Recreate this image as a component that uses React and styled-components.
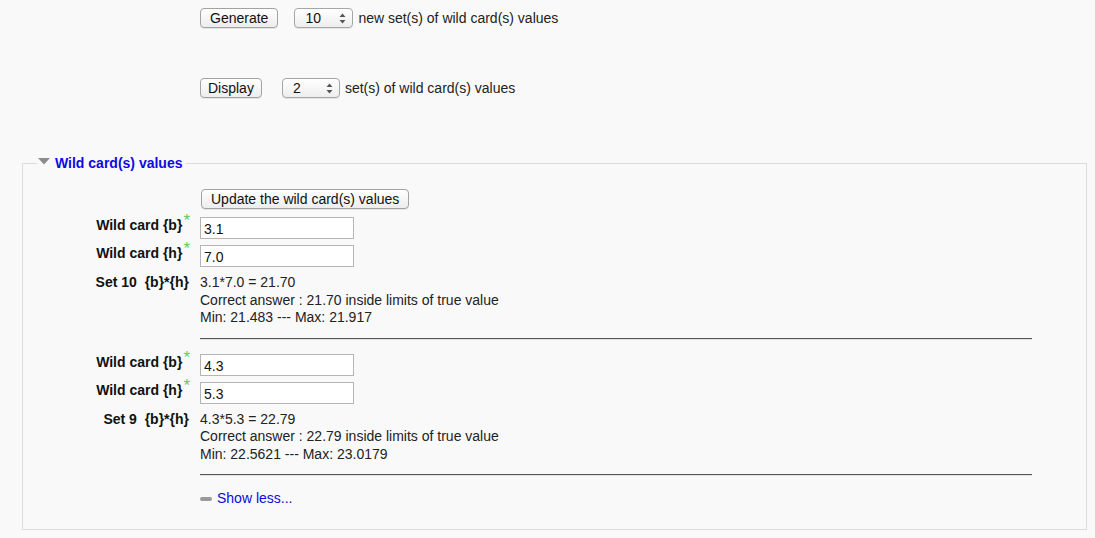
import React from "react";
import styled, { createGlobalStyle } from "styled-components";

const GlobalStyle = createGlobalStyle`
  html, body {
    margin: 0;
    padding: 0;
    background-color: #f9f9f9;
  }
  body {
    font-family: "Liberation Sans", Arial, sans-serif;
    font-size: 14px;
    color: #222;
  }
`;

const wildcardSets = [
  {
    id: 10,
    b: "3.1",
    h: "7.0",
    formula: "3.1*7.0 = 21.70",
    answer: "Correct answer : 21.70 inside limits of true value",
    limits: "Min: 21.483 --- Max: 21.917",
  },
  {
    id: 9,
    b: "4.3",
    h: "5.3",
    formula: "4.3*5.3 = 22.79",
    answer: "Correct answer : 22.79 inside limits of true value",
    limits: "Min: 22.5621 --- Max: 23.0179",
  },
];

function Spinner({ value, width }) {
  return (
    <FakeSelect $w={width}>
      <span>{value}</span>
      <svg width="7" height="11" viewBox="0 0 7 11">
        <path d="M3.5 0.5 L6.5 4 L0.5 4 Z" fill="#555" />
        <path d="M3.5 10.5 L6.5 7 L0.5 7 Z" fill="#555" />
      </svg>
    </FakeSelect>
  );
}

function WildcardBlock({ set, first }) {
  return (
    <>
      <FItem $mt={first ? 8 : 14}>
        <Label>
          Wild card {"{b}"}
          <Req>*</Req>
        </Label>
        <div>
          <TextInput defaultValue={set.b} />
        </div>
      </FItem>
      <FItem $mt={6}>
        <Label>
          Wild card {"{h}"}
          <Req>*</Req>
        </Label>
        <div>
          <TextInput defaultValue={set.h} />
        </div>
      </FItem>
      <FItem $mt={7}>
        <Label $pr={1}>
          Set {set.id}&nbsp;&nbsp;{"{b}*{h}"}
        </Label>
        <Static>
          <div>{set.formula}</div>
          <div>{set.answer}</div>
          <div>{set.limits}</div>
        </Static>
      </FItem>
      <FItem $mt={11}>
        <span />
        <Rule />
      </FItem>
    </>
  );
}

export default function App() {
  return (
    <>
      <GlobalStyle />
      <Page>
        <TopForm>
          <TopRow>
            <Button $pad={9}>Generate</Button>
            <Spinner value="10" width={59} />
            <TopText>new set(s) of wild card(s) values</TopText>
          </TopRow>
          <TopRow $mt={50}>
            <Button $gap={20} $pad={7}>
              Display
            </Button>
            <Spinner value="2" width={58} />
            <TopText>set(s) of wild card(s) values</TopText>
          </TopRow>
        </TopForm>

        <Fieldset>
          <Legend>
            <svg width="12" height="7" viewBox="0 0 12 7">
              <path d="M0 0 L12 0 L6 6.5 Z" fill="#8c8c8c" />
            </svg>
            <span>Wild card(s) values</span>
          </Legend>

          <FItem $mt={18}>
            <span />
            <div>
              <Button $gap={0} $pad={9} $ml={1}>
                Update the wild card(s) values
              </Button>
            </div>
          </FItem>

          {wildcardSets.map((s, i) => (
            <WildcardBlock key={s.id} set={s} first={i === 0} />
          ))}

          <FItem $mt={14}>
            <span />
            <ShowLess>
              <Minus />
              <a href="#">Show less...</a>
            </ShowLess>
          </FItem>
        </Fieldset>
      </Page>
    </>
  );
}

const Page = styled.div`
  width: 1095px;
  height: 538px;
  overflow: hidden;
`;

const TopForm = styled.div`
  padding: 8px 0 0 200px;
`;

const TopRow = styled.div`
  display: flex;
  align-items: center;
  height: 20px;
  margin-top: ${(p) => p.$mt || 0}px;
`;

const Button = styled.button`
  box-sizing: border-box;
  height: 20px;
  margin: 0 ${(p) => (p.$gap === undefined ? 16 : p.$gap)}px 0
    ${(p) => p.$ml || 0}px;
  padding: 0 ${(p) => p.$pad || 9}px;
  font-family: "Liberation Sans", Arial, sans-serif;
  font-size: 14px;
  line-height: 18px;
  color: #111;
  background: linear-gradient(#ffffff, #ededed);
  border: 1px solid #a2a2a2;
  border-radius: 4px;
  box-shadow: 0 1px 0 rgba(0, 0, 0, 0.08);
  cursor: pointer;
`;

const FakeSelect = styled.div`
  box-sizing: border-box;
  width: ${(p) => p.$w}px;
  height: 20px;
  display: flex;
  align-items: center;
  justify-content: space-between;
  padding: 0 6px 0 10px;
  background: linear-gradient(#ffffff, #eeeeee);
  border: 1px solid #a6a6a6;
  border-radius: 4px;
  box-shadow: 0 1px 0 rgba(0, 0, 0, 0.08);
  color: #111;
`;

const TopText = styled.span`
  margin-left: 5px;
  color: #222;
`;

const Fieldset = styled.fieldset`
  margin: 57px 8px 0 22px;
  padding: 0 0 22px 0;
  border: 1px solid #dcdcdc;
  min-width: 0;
`;

const Legend = styled.legend`
  margin-left: 14px;
  padding: 0 4px 0 1px;
  line-height: 16px;
  height: 16px;
  display: flex;
  align-items: center;
  gap: 5px;
  color: #0b0be0;
  font-weight: bold;
  font-size: 14px;

  svg {
    margin-top: -3px;
  }
`;

const FItem = styled.div`
  display: grid;
  grid-template-columns: 167px 832px;
  column-gap: 10px;
  margin-top: ${(p) => p.$mt || 0}px;
`;

const Label = styled.div`
  text-align: right;
  font-weight: bold;
  color: #111;
  line-height: 17px;
  height: 17px;
  white-space: nowrap;
  padding-right: ${(p) => p.$pr || 0}px;
`;

const Req = styled.span`
  color: #5fcc5f;
  font-weight: normal;
  font-size: 17px;
  line-height: 0;
  margin-left: 1px;
  position: relative;
  top: -4px;
`;

const TextInput = styled.input`
  box-sizing: border-box;
  width: 154px;
  height: 22px;
  padding: 2px 3px 0;
  font-family: "Liberation Sans", Arial, sans-serif;
  font-size: 14px;
  color: #111;
  background: #fff;
  border: 1px solid #b5b5b5;
  outline: none;
`;

const Static = styled.div`
  line-height: 17.5px;
  color: #222;
`;

const Rule = styled.hr`
  margin: 0;
  height: 0;
  border: 0;
  border-top: 1px solid #555;
  border-bottom: 1px solid #e2e2e2;
`;

const ShowLess = styled.div`
  display: flex;
  align-items: center;
  line-height: 17px;

  a {
    color: #0b0be0;
    text-decoration: none;
  }
`;

const Minus = styled.span`
  display: inline-block;
  width: 12px;
  height: 4px;
  border-radius: 2px;
  background: #9a9a9a;
  margin-right: 5px;
`;
